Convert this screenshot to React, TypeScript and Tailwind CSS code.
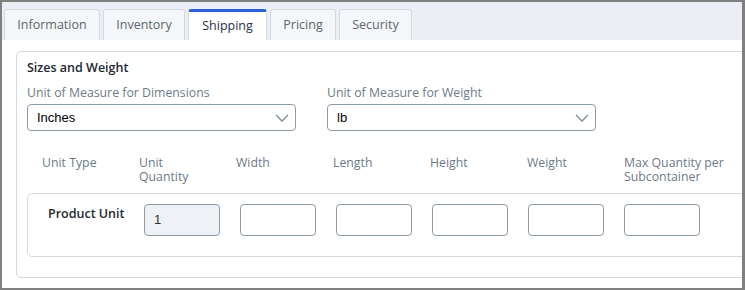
import React from "react";

const tabs = ["Information", "Inventory", "Shipping", "Pricing", "Security"];
const tabWidths = ["w-[96px]", "w-[82px]", "w-[79px]", "w-[66px]", "w-[73px]"];

const headers = [
  "Unit Type",
  "Unit Quantity",
  "Width",
  "Length",
  "Height",
  "Weight",
  "Max Quantity per Subcontainer",
];

const Chevron = () => (
  <svg width="14" height="8" viewBox="0 0 14 8" fill="none" className="text-[#7a8a96]">
    <path d="M1 1l6 6 6-6" stroke="currentColor" strokeWidth="1.3" />
  </svg>
);

const Select = ({ label, value }: { label: string; value: string }) => (
  <div className="flex flex-col w-[269px]">
    <span className="text-[12.3px] leading-[17px] text-[#6c7a88] mb-[3px]">{label}</span>
    <div className="h-[27px] border border-[#8c9ba7] rounded-[4px] flex items-center justify-between pl-[9px] pr-[6px] bg-white">
      <span className="text-[13px] text-black font-['Liberation_Sans',sans-serif]">{value}</span>
      <Chevron />
    </div>
  </div>
);

export default function App() {
  return (
    <div className="w-[745px] h-[290px] border-2 border-r-[3px] border-[#808080] overflow-hidden bg-white font-['Open_Sans',sans-serif]">
      {/* Tabs */}
      <div className="h-[38px] bg-[#ebeff5] flex items-end gap-[3px] pl-[2px]">
        {tabs.map((t, i) =>
          t === "Shipping" ? (
            <div
              key={t}
              className={`${tabWidths[i]} h-[31px] bg-white border-x border-[#d3d9e0] border-t-[3px] border-t-[#2b5fd6] rounded-t-[3px] flex items-center justify-center text-[12.5px] text-[#2a2f45] pt-[1px]`}
            >
              {t}
            </div>
          ) : (
            <div
              key={t}
              className={`${tabWidths[i]} h-[31px] bg-[#f4f6f9] border border-b-0 border-[#d3d9e0] rounded-t-[3px] flex items-center justify-center text-[12.5px] text-[#5d6670]`}
            >
              {t}
            </div>
          )
        )}
      </div>

      {/* Content */}
      <div className="pl-[14px] pt-[11px]">
        <div className="w-[760px] h-[227px] border border-[#d3d9e0] rounded-[5px] pl-[10px] pt-[7px]">
          <div className="text-[12.5px] font-semibold text-[#22282f] leading-[18px]">Sizes and Weight</div>
          <div className="flex gap-[31px] mt-[7px]">
            <Select label="Unit of Measure for Dimensions" value="Inches" />
            <Select label="Unit of Measure for Weight" value="lb" />
          </div>

          <div className="flex pl-[15px] mt-[25px] h-[32px]">
            {headers.map((h, i) => (
              <div
                key={h}
                className={`${i === 6 ? "w-[120px]" : "w-[97px] pr-[24px]"} shrink-0 text-[12.3px] leading-[14px] text-[#6c7a88]`}
              >
                {h}
              </div>
            ))}
          </div>

          <div className="mt-[5px] h-[64px] border border-[#d3d9e0] rounded-[5px] flex pl-[20px] pt-[10px]">
            <div className="w-[96px] shrink-0 text-[12.5px] font-semibold text-[#22282f] leading-[18px] pt-[1px]">
              Product Unit
            </div>
            <div className="w-[96px] shrink-0">
              <div className="w-[76px] h-[32px] bg-[#eef1f5] border border-[#8c9ba7] rounded-[4px] flex items-center pl-[9px] text-[13px] text-[#333] font-['Liberation_Sans',sans-serif]">
                1
              </div>
            </div>
            {[0, 1, 2, 3, 4].map((n) => (
              <div key={n} className="w-[96px] shrink-0">
                <div className="w-[76px] h-[32px] bg-white border border-[#8c9ba7] rounded-[4px]" />
              </div>
            ))}
          </div>
        </div>
      </div>
    </div>
  );
}
